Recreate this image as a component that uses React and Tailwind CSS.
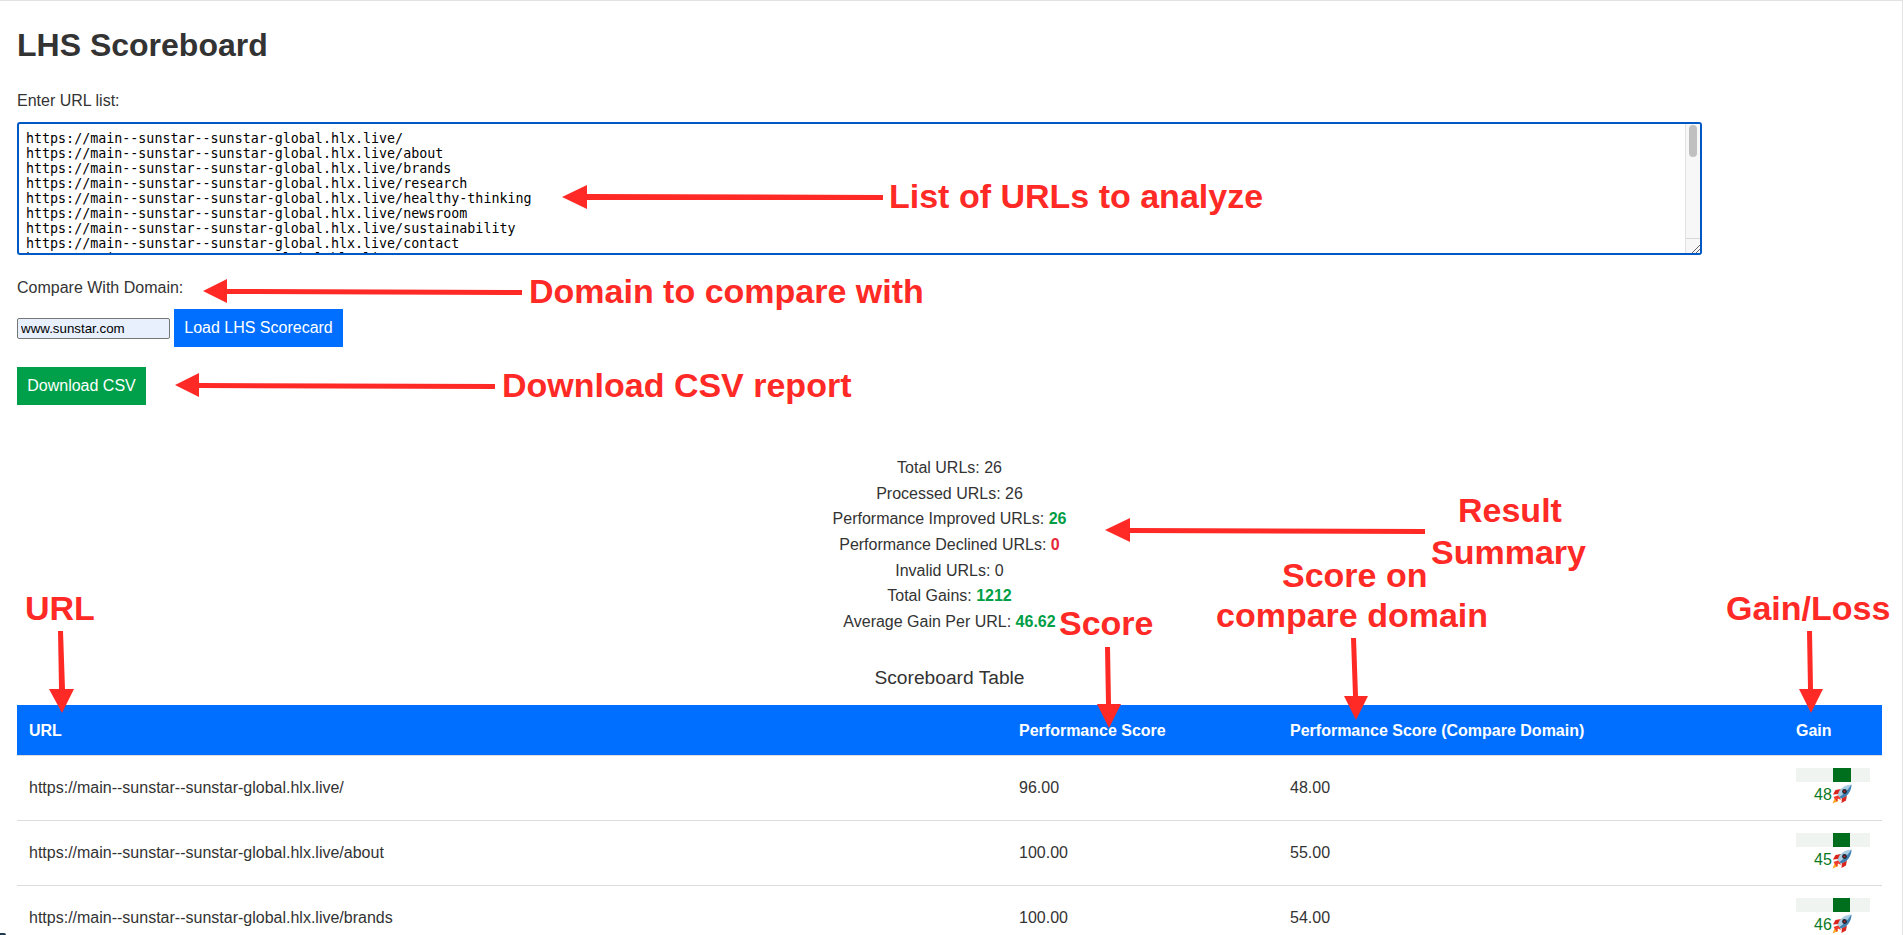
import React from 'react';

const host = 'https://main--sunstar--sunstar-global.hlx.live';
const urlList = ['/', '/about', '/brands', '/research', '/healthy-thinking', '/newsroom', '/sustainability', '/contact', '/careers']
  .map((p) => host + p)
  .join('\n');

const rows = [
  { url: host + '/', score: '96.00', other: '48.00', gain: 48 },
  { url: host + '/about', score: '100.00', other: '55.00', gain: 45 },
  { url: host + '/brands', score: '100.00', other: '54.00', gain: 46 },
];

const Rocket = () => (
  <svg viewBox="0 0 20 20" className="inline-block w-[20px] h-[20px] align-[-4px]">
    <path d="M0.5 19.5 L3 13.5 L6.5 17 Z" fill="#f9a825" />
    <path d="M1.5 13 L7 11 L9 16 L6 14.5 L5 18 Z" fill="#ef3b2d" />
    <path d="M9 5 L3.5 6 L1 10.5 L7 10 Z" fill="#d8261f" />
    <path d="M15 11 L14 16.5 L9.5 19 L10 13 Z" fill="#d8261f" />
    <path d="M19.5 0.5 C15 0.5 10.5 2.5 7.5 6.5 L5.5 11 L9 14.5 L13.5 12.5 C17.5 9.5 19.5 5 19.5 0.5 Z" fill="#a9cde3" />
    <path d="M19.5 0.5 C19.5 5 17.5 9.5 13.5 12.5 L9 14.5 L7.5 13 C12 10 16 5.5 19.5 0.5 Z" fill="#3f7fb0" />
    <circle cx="12.5" cy="7.5" r="2.4" fill="#1c2430" />
    <circle cx="12.5" cy="7.5" r="1.1" fill="#c2252a" />
  </svg>
);

const GainCell = ({ gain }) => (
  <div className="w-[74px] text-center text-[#0b7a26]">
    <div className="h-[14px] bg-[#eff4f1]">
      <div className="h-full ml-[50%] bg-[#006f1d]" style={{ width: `${gain * 0.37}px` }}></div>
    </div>
    <div className="text-[16px] leading-[20px] mt-[2px]">
      {gain}
      <Rocket />
    </div>
  </div>
);

const Good = ({ children }) => <span className="font-bold text-[#009e46]">{children}</span>;

const Annotations = () => (
  <div className="absolute inset-0 pointer-events-none text-[34px] leading-[40px] font-bold text-[#ff2a26] whitespace-nowrap">
    <svg className="absolute inset-0" width="1903" height="935" viewBox="0 0 1903 935" fill="#ff2a26">
      {/* left pointing arrows */}
      <path d="M562 196 L587 184 L587 193 L883 194 L883 199 L587 199 L587 208 Z" />
      <path d="M203 290 L227 278 L227 288 L522 289 L522 294 L227 293 L227 302 Z" />
      <path d="M175 384 L199 372 L199 382 L495 383 L495 388 L199 387 L199 396 Z" />
      <path d="M1105 529 L1130 517 L1130 527 L1425 528 L1425 533 L1130 532 L1130 541 Z" />
      {/* down pointing arrows */}
      <path d="M58 630 L63 630 L65 688 L74 688 L62 712 L49 688 L59 688 Z" />
      <path d="M1105 646 L1110 646 L1111 703 L1121 703 L1109 727 L1097 703 L1106 703 Z" />
      <path d="M1351 637 L1356 637 L1358 695 L1368 695 L1356 719 L1344 695 L1353 695 Z" />
      <path d="M1807 630 L1812 630 L1813 688 L1823 688 L1811 712 L1799 688 L1808 688 Z" />
    </svg>
    <span className="absolute left-[889px] top-[175px]">List of URLs to analyze</span>
    <span className="absolute left-[529px] top-[270px]">Domain to compare with</span>
    <span className="absolute left-[502px] top-[364px]">Download CSV report</span>
    <span className="absolute left-[1458px] top-[489px]">Result</span>
    <span className="absolute left-[1431px] top-[531px]">Summary</span>
    <span className="absolute left-[1282px] top-[554px]">Score on</span>
    <span className="absolute left-[1216px] top-[594px]">compare domain</span>
    <span className="absolute left-[1726px] top-[587px]">Gain/Loss</span>
    <span className="absolute left-[1059px] top-[602px]">Score</span>
    <span className="absolute left-[25px] top-[587px]">URL</span>
  </div>
);

const App = () => {
  return (
    <div className="relative h-[935px] overflow-hidden bg-white border-t border-r border-[#e2e2e2] pl-[17px] pr-[20px] text-[#333] font-['Liberation_Sans',Arial,sans-serif] text-[16px]">
      <h1 className="mt-[26px] text-[32px] leading-[36px] font-bold">LHS Scoreboard</h1>

      <label className="block mt-[30px] leading-[16px]">Enter URL list:</label>
      <div className="relative mt-[13px] w-[1685px] h-[133px]">
        <textarea
          readOnly
          value={urlList}
          className="block w-full h-full resize-none overflow-hidden border-2 border-[#0058c4] rounded-[3px] pl-[7px] pt-[7px] pr-[20px] text-[13.33px] leading-[15px] text-black font-['DejaVu_Sans_Mono',monospace] whitespace-pre outline-none"
        ></textarea>
        {/* scrollbar */}
        <div className="absolute right-[2px] top-[2px] bottom-[2px] w-[15px] bg-[#f7f7f7] border-l border-[#e2e2e2]">
          <div className="mt-[1px] mx-auto w-[8px] h-[32px] rounded-full bg-[#c0c0c0]"></div>
          <div className="absolute bottom-0 left-0 right-0 h-[15px] border-t border-[#d8d8d8]">
            <svg viewBox="0 0 14 14" className="w-full h-full" stroke="#666" strokeWidth="1">
              <path d="M6 14 L14 6 M10 14 L14 10" />
            </svg>
          </div>
        </div>
      </div>

      <label className="block mt-[25px] leading-[16px]">Compare With Domain:</label>
      <div className="mt-[13px] flex items-center gap-[4px]">
        <input
          readOnly
          value="www.sunstar.com"
          className="w-[153px] h-[21px] bg-[#e8f0fe] border border-[#767676] rounded-[2px] px-[3px] text-[13.33px] text-black outline-none"
        />
        <button className="w-[169px] h-[38px] bg-[#006fff] text-white text-[16px]">Load LHS Scorecard</button>
      </div>
      <button className="block mt-[20px] w-[129px] h-[38px] bg-[#00a04a] text-white text-[16px]">Download CSV</button>

      <div className="mt-[50px] text-center leading-[25.67px]">
        <div>Total URLs: 26</div>
        <div>Processed URLs: 26</div>
        <div>Performance Improved URLs: <Good>26</Good></div>
        <div>Performance Declined URLs: <span className="font-bold text-[#e8273a]">0</span></div>
        <div>Invalid URLs: 0</div>
        <div>Total Gains: <Good>1212</Good></div>
        <div>Average Gain Per URL: <Good>46.62</Good></div>
      </div>

      <div className="mt-[31px] text-center text-[19.2px] leading-[24px]">Scoreboard Table</div>

      <table className="mt-[15px] w-[1865px] table-fixed border-separate border-spacing-0 text-left">
        <colgroup>
          <col className="w-[990px]" />
          <col className="w-[271px]" />
          <col className="w-[506px]" />
          <col className="w-[98px]" />
        </colgroup>
        <thead>
          <tr className="h-[51px] text-white">
            <th className="px-[12px] pt-[2px] font-bold bg-[#006fff] border-b border-[#dcdcdc]">URL</th>
            <th className="px-[12px] pt-[2px] font-bold bg-[#006fff] border-b border-[#dcdcdc]">Performance Score</th>
            <th className="px-[12px] pt-[2px] font-bold bg-[#006fff] border-b border-[#dcdcdc]">Performance Score (Compare Domain)</th>
            <th className="px-[12px] pt-[2px] font-bold bg-[#006fff] border-b border-[#dcdcdc]">Gain</th>
          </tr>
        </thead>
        <tbody>
          {rows.map((r) => (
            <tr key={r.url} className="h-[65px]">
              <td className="px-[12px] border-b border-[#dcdcdc]">{r.url}</td>
              <td className="px-[12px] border-b border-[#dcdcdc]">{r.score}</td>
              <td className="px-[12px] border-b border-[#dcdcdc]">{r.other}</td>
              <td className="px-[12px] align-top pt-[12px] border-b border-[#dcdcdc]"><GainCell gain={r.gain} /></td>
            </tr>
          ))}
        </tbody>
      </table>

      <Annotations />
      <div className="absolute left-0 bottom-0 w-[6px] h-[2px] rounded-tr-full bg-[#1c3a52]"></div>
    </div>
  );
};

export default App;
